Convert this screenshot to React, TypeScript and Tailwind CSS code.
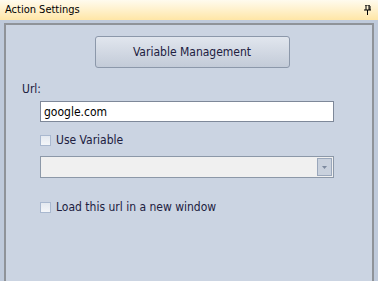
function Check({ label }: { label: string }) {
  return (
    <div className="flex items-center gap-[5px] h-[14px]">
      <div className="w-[11px] h-[11px] border border-[#a9b8cf] bg-gradient-to-b from-[#e4e9f0] to-[#f4f6f9]" />
      <span className="text-[12px] leading-[14px] text-[#202040]">{label}</span>
    </div>
  );
}

export default function App() {
  return (
    <div className="w-[378px] h-[281px] overflow-hidden bg-[#bfcadb] flex flex-col" style={{ fontFamily: 'Tahoma, "DejaVu Sans Condensed", "Liberation Sans", sans-serif' }}>
      {/* title bar */}
      <div className="h-[20px] shrink-0 flex items-center justify-between pl-[5px] pr-[3px] bg-gradient-to-b from-[#fffbee] to-[#ffe6a6]">
        <span className="text-[11px] text-black">Action Settings</span>
        <svg width="9" height="10" viewBox="0 0 9 10" className="mr-[3px]">
          <path d="M2 0h5M3 0v5M6 0v5M7 1v4M1 5h7M4.5 5v5" stroke="#000" strokeWidth="1" fill="none" />
        </svg>
      </div>

      <div className="flex-1 pt-[3px] pl-[4px] pr-[4px] flex">
        <div className="flex-1 border-l-2 border-t-2 border-r-2 border-[#8f9399] bg-[#cbd4e2] flex flex-col items-start">
          <div className="self-stretch flex justify-center pt-[11px] pl-[6px]">
            <button className="w-[195px] h-[32px] rounded-[3px] border border-[#8c98aa] bg-gradient-to-b from-[#e1e6ee] to-[#c3cbd8] text-[12px] text-[#202040]">
              Variable Management
            </button>
          </div>
          <div className="mt-[14px] ml-[16px] text-[12px] leading-[14px] text-[#202040]">Url:</div>
          <div className="mt-[5px] ml-[34px] w-[294px] h-[21px] border border-[#7e8899] bg-white flex items-center pl-[3px] text-[12px] text-black">
            google.com
          </div>
          <div className="mt-[11px] ml-[34px]">
            <Check label="Use Variable" />
          </div>
          <div className="mt-[9px] ml-[34px] w-[294px] h-[22px] border border-[#8c98a8] bg-[#f0f0f0] flex items-center justify-end pr-[1px]">
            <div className="w-[15px] h-[18px] border border-[#9aa7bb] bg-[#c9d1dd] flex items-center justify-center">
              <svg width="5" height="3" viewBox="0 0 5 3">
                <path d="M0 0h5L2.5 3z" fill="#7d8a9e" />
              </svg>
            </div>
          </div>
          <div className="mt-[22px] ml-[34px]">
            <Check label="Load this url in a new window" />
          </div>
        </div>
      </div>
    </div>
  );
}
